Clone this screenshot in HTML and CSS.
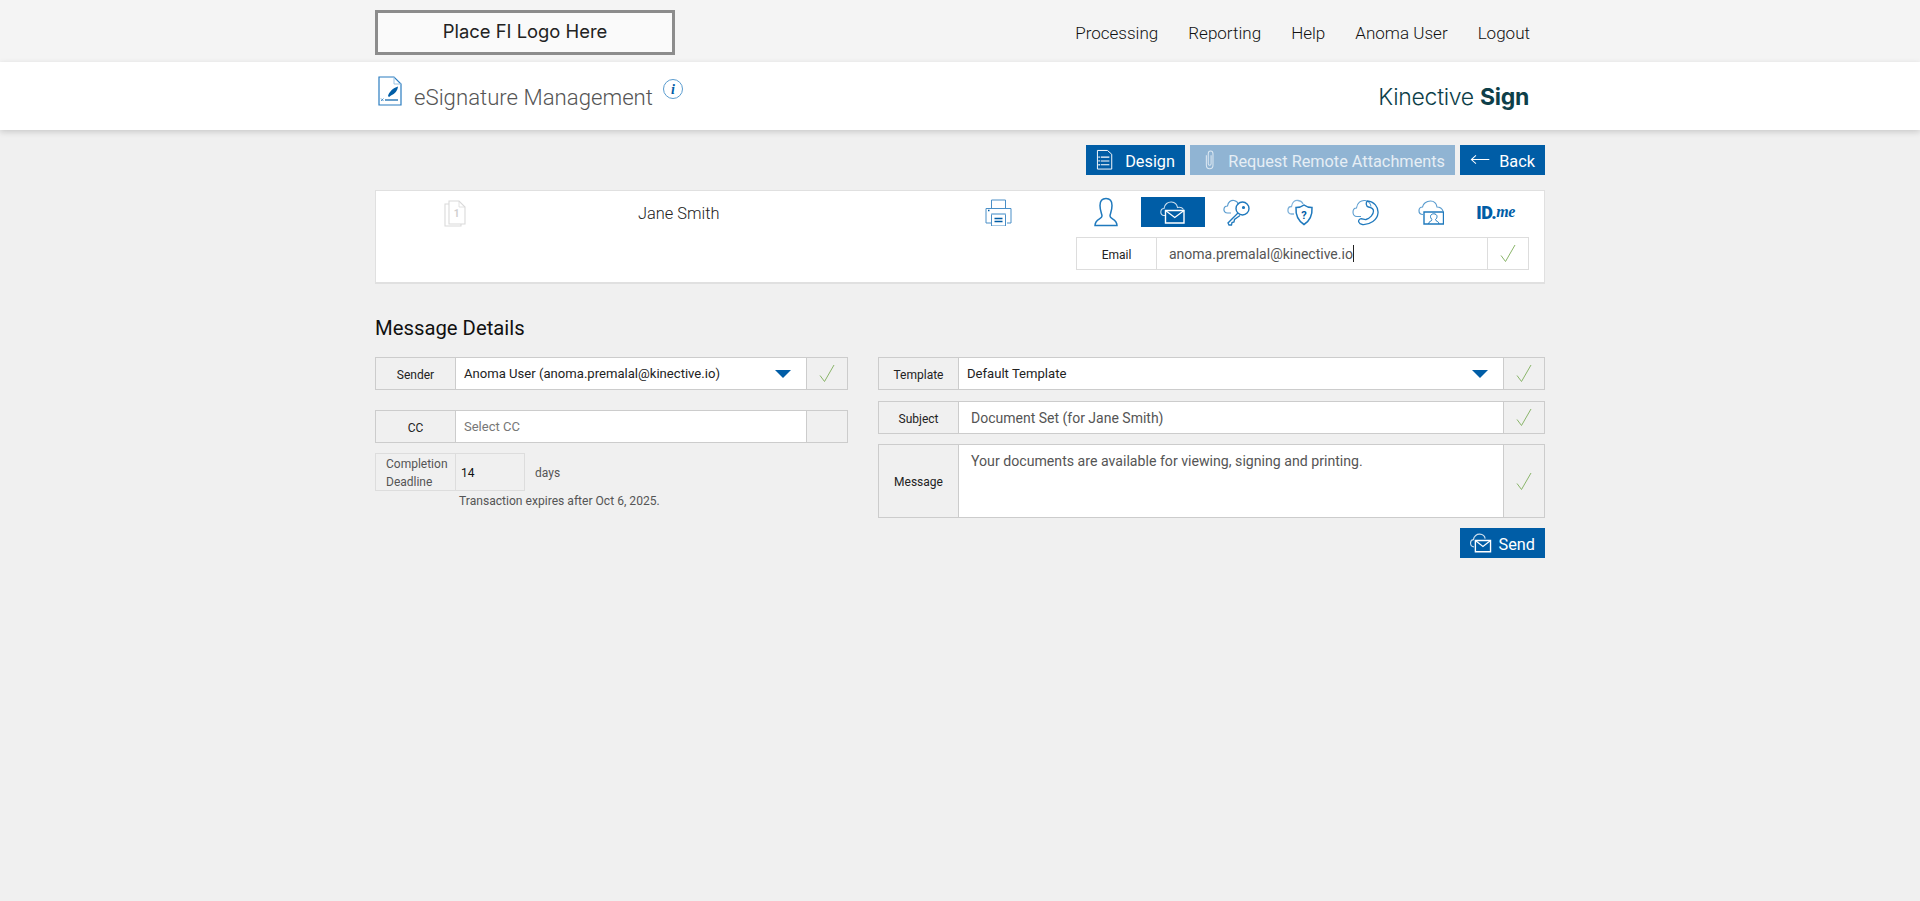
FILE: index.html
```html
<!DOCTYPE html>
<html lang="en">
<head>
<meta charset="utf-8">
<title>eSignature Management</title>
<link rel="stylesheet" href="styles.css">
</head>
<body>
<header class="topbar">
  <div class="wrap topbar-inner">
    <div class="logo-box">Place FI Logo Here</div>
    <nav class="nav">
      <a>Processing</a><a>Reporting</a><a>Help</a><a>Anoma User</a><a>Logout</a>
    </nav>
  </div>
</header>
<div class="titlebar">
  <div class="wrap titlebar-inner">
    <div class="title-left">
      <svg class="doc-icon" width="24" height="30" viewBox="0 0 24 30" fill="none">
        <path d="M1 1H16L23 8V29H1Z" stroke="#2a7cc0" stroke-width="1.2"/>
        <path d="M16 1V8H23" stroke="#9cc3e2" stroke-width="1"/>
        <path d="M10 20C11 16 15 12 20 10.500C19.500 14.500 17 18 13 19.500L11 21Z" fill="#005da6"/>
        <path d="M7 24H20" stroke="#005da6" stroke-width="1.2"/>
        <path d="M3 22.500L5.500 25M5.500 22.500L3 25" stroke="#2a7cc0" stroke-width=".8"/>
      </svg>
      <h1 class="page-title">eSignature Management</h1>
      <svg class="info-icon" width="22" height="22" viewBox="0 0 22 22" fill="none">
        <circle cx="11" cy="11" r="9.500" stroke="#5a9ccf" stroke-width="1"/>
        <text x="11" y="16" text-anchor="middle" class="info-i">i</text>
      </svg>
    </div>
    <div class="brand">Kinective <b>Sign</b></div>
  </div>
</div>
<main class="wrap">
  <div class="actions">
    <button class="btn btn-design">
      <svg width="18" height="22" viewBox="0 0 18 22" fill="none" stroke="#fff" stroke-width="1">
        <path d="M1.500 1H12L16.500 5V20.500H1.500Z"/><path d="M5 8H14M5 12H14M5 16H14" stroke-width="1.200"/><path d="M2.500 8H4M2.500 12H4M2.500 16H4" stroke-width="1.400"/>
      </svg>
      <span>Design</span>
    </button>
    <button class="btn btn-muted">
      <svg width="12" height="22" viewBox="0 0 12 22" fill="none" stroke="#dce8f2" stroke-width="1.100">
        <path d="M2.500 6V16.500C2.500 21.500 9.500 21.500 9.500 16.500V4.500C9.500 .5 4.500 .5 4.500 4.500V15C4.500 17 7.500 17 7.500 15V6"/>
      </svg>
      <span>Request Remote Attachments</span>
    </button>
    <button class="btn btn-back">
      <svg width="22" height="12" viewBox="0 0 22 12" fill="none" stroke="#fff" stroke-width="1.100">
        <path d="M21 5.500H1.500M6.500 1L1.500 5.500L6.500 10"/>
      </svg>
      <span>Back</span>
    </button>
  </div>

  <section class="panel">
    <div class="panel-page">
      <svg width="22" height="27" viewBox="0 0 22 27" fill="none" stroke="#dadada" stroke-width="1.100">
        <path d="M5 1H15L21 7V24H5Z"/><path d="M5 4H1V26H17V24"/><path d="M15 1V7H21" stroke-width=".8"/>
        <text x="12.500" y="17" text-anchor="middle" class="page-num">1</text>
      </svg>
    </div>
    <div class="panel-name">Jane Smith</div>
    <div class="panel-print">
      <svg width="27" height="27" viewBox="0 0 27 27" fill="none" stroke="#4a8fc7" stroke-width="1">
        <path d="M6.500 9V1H20.500V9"/><path d="M6 24H1V9.500H26V24H22"/><path d="M6.500 15H20.500V27H6.500Z" fill="#fff"/><path d="M6.500 15H20.500" stroke="#9cc3e2" stroke-width="2"/>
        <path d="M9.500 19.500H17.500M9.500 22.500H17.500" stroke="#005da6" stroke-width="1.300"/><path d="M3 11.500H4.500" stroke="#005da6" stroke-width="1.500"/>
      </svg>
    </div>
    <div class="panel-auth">
      <div class="tabs">
        <a class="tab">
          <svg width="24" height="30" viewBox="0 0 24 30" fill="none" stroke="#1f79bd" stroke-width="1.500">
            <path d="M8 19C8 17 6 14 6 8.500C6 4 8.500 1.500 12 1.500C15.500 1.500 18 4 18 8.500C18 14 16 17 16 19C16 22 23 22 23 28.500H1C1 22 8 22 8 19Z"/>
          </svg>
        </a>
        <a class="tab tab-active">
          <svg width="25" height="23" viewBox="0 0 25 23" fill="none" stroke="#fff" stroke-width="1.100">
            <path class="cloud-soft" d="M5 14.500H4C-.500 14.500 0 7.500 4 7.500C4.500 3 8 .8 11.500 1C15 1.200 17 3.500 17.500 6.500C20 6 22.500 7 23.500 8.500"/>
            <path d="M5.500 9.500H24V22H5.500Z" stroke-width="1.400"/><path d="M5.500 9.500L14.750 16.500L24 9.500" stroke-width="1.200"/>
          </svg>
        </a>
        <a class="tab">
          <svg width="27" height="27" viewBox="0 0 27 27" fill="none" stroke="#1f79bd" stroke-width="1.200">
            <path stroke="#5a9ccf" d="M8 14H4.500C-.500 14 0 7 4.500 7C5 3 8 1 11 1.500C13.500 2 15 3.500 15.500 5.500"/>
            <circle cx="19.500" cy="9.500" r="6.500" stroke-width="1.400"/><circle cx="20.500" cy="8.500" r="1" fill="#1f79bd"/>
            <path d="M15 14L5 24L6 26L8.500 26L9 23.500L11 23L11.500 20.500L17 16.500" stroke-width="1.300"/>
          </svg>
        </a>
        <a class="tab">
          <svg width="27" height="27" viewBox="0 0 27 27" fill="none" stroke="#1f79bd" stroke-width="1.300">
            <path stroke="#7fb2da" d="M7 15H4.500C-.500 15 0 7.500 4.500 7.500C5 3 8 1 11 1.500C14 2 15.500 3.500 16 5"/>
            <path d="M17 6C19.500 8 22 8.500 25 8.500C25.500 16 22.500 22 17 25.500C11.500 22 8.500 16 9 8.500C12 8.500 14.500 8 17 6Z" stroke-width="1.500"/>
            <text x="17" y="19.500" text-anchor="middle" class="shield-q">?</text>
          </svg>
        </a>
        <a class="tab">
          <svg width="27" height="27" viewBox="0 0 27 27" fill="none" stroke="#1f79bd" stroke-width="1.300">
            <path stroke="#5a9ccf" stroke-width="1.100" d="M9 17.500H5C-.500 17.500 0 9 4.500 9C5 4 9 1 13 1.500C16.500 2 18.500 4.500 19 7.500"/>
            <path d="M15.500 2C22 2.500 26.500 8 26 14C25.500 21 18 26 10.500 25.500C6.500 25 5.500 21.500 8 20C10 19 12 21 14 20.500C18 19.500 21.500 15.500 21.500 12C21.500 9.500 19 8.500 16.500 8C14 7.500 13.500 3.500 15.500 2Z"/>
          </svg>
        </a>
        <a class="tab">
          <svg width="26" height="25" viewBox="0 0 26 25" fill="none" stroke="#1f79bd" stroke-width="1.200">
            <path stroke="#5a9ccf" d="M5 14.500C-.500 14.500 0 7 4.500 7C5 3.500 8.500 1 12.500 1C16.500 1 18.500 4 19 7C21.500 7 24 8.500 25 11"/>
            <path d="M6 12H25.500V24H6Z" stroke-width="1.400"/>
            <path d="M10.500 24C10.500 21 14 21.500 14 19.500C13 18.800 12.500 17.500 12.500 16.500C12.500 14.800 14 13.800 15.750 13.800C17.500 13.800 19 14.800 19 16.500C19 17.500 18.500 18.800 17.500 19.500C17.500 21.500 21 21 21 24" stroke-width="1"/>
          </svg>
        </a>
        <a class="tab tab-id"><b>ID.</b><i>me</i></a>
      </div>
      <div class="field field-email">
        <div class="field-label field-label-plain">Email</div>
        <div class="field-value field-value-lg">anoma.premalal@kinective.io<span class="caret"></span></div>
        <div class="field-check field-check-plain">
          <svg class="check" width="16" height="19" viewBox="0 0 16 19" fill="none"><path d="M1 11.500L5.500 17.500L15 1"/></svg>
        </div>
      </div>
    </div>
  </section>

  <h2 class="section-title">Message Details</h2>

  <section class="columns">
    <div class="col-left">
      <div class="field">
        <div class="field-label">Sender</div>
        <div class="field-value field-select">
          <span>Anoma User (anoma.premalal@kinective.io)</span><span class="arrow"></span>
        </div>
        <div class="field-check">
          <svg class="check" width="16" height="19" viewBox="0 0 16 19" fill="none"><path d="M1 11.500L5.500 17.500L15 1"/></svg>
        </div>
      </div>
      <div class="field field-cc">
        <div class="field-label">CC</div>
        <div class="field-value field-placeholder">Select CC</div>
        <div class="field-check"></div>
      </div>
      <div class="deadline">
        <div class="deadline-label">Completion<br>Deadline</div>
        <div class="deadline-value">14</div>
        <div class="deadline-unit">days</div>
      </div>
      <p class="expires">Transaction expires after Oct 6, 2025.</p>
    </div>
    <div class="col-right">
      <div class="field">
        <div class="field-label">Template</div>
        <div class="field-value field-select">
          <span>Default Template</span><span class="arrow"></span>
        </div>
        <div class="field-check">
          <svg class="check" width="16" height="19" viewBox="0 0 16 19" fill="none"><path d="M1 11.500L5.500 17.500L15 1"/></svg>
        </div>
      </div>
      <div class="field field-subject">
        <div class="field-label">Subject</div>
        <div class="field-value field-value-lg">Document Set (for Jane Smith)</div>
        <div class="field-check">
          <svg class="check" width="16" height="19" viewBox="0 0 16 19" fill="none"><path d="M1 11.500L5.500 17.500L15 1"/></svg>
        </div>
      </div>
      <div class="field field-message">
        <div class="field-label">Message</div>
        <div class="field-value field-value-lg field-top">Your documents are available for viewing, signing and printing.</div>
        <div class="field-check">
          <svg class="check" width="16" height="19" viewBox="0 0 16 19" fill="none"><path d="M1 11.500L5.500 17.500L15 1"/></svg>
        </div>
      </div>
      <div class="send-row">
        <button class="btn btn-send">
          <svg width="22" height="20" viewBox="0 0 22 20" fill="none" stroke="#fff" stroke-width="1.200">
            <path class="cloud-soft" d="M4 14C-.500 13.500 -.500 7 3.500 6.500C4 3 7 .8 10 1C13 1.200 15 3 15.500 5.500"/>
            <path d="M5.500 7.500H21V19H5.500Z" stroke-width="1.400"/><path d="M5.500 7.500L13.250 13.500L21 7.500"/>
          </svg>
          <span>Send</span>
        </button>
      </div>
    </div>
  </section>
</main>
</body>
</html>
```
FILE: styles.css
```css
* { box-sizing: border-box; }
html, body { margin: 0; padding: 0; }
body {
  background: #f0f0f0;
  color: #333;
  font-family: Roboto, "Liberation Sans", sans-serif;
  min-height: 901px;
}
.wrap { width: 1170px; margin: 0 auto; }

.topbar { height: 62px; background: #f4f4f4; }
.topbar-inner { display: flex; justify-content: space-between; align-items: flex-start; }
.logo-box {
  width: 300px;
  height: 45px;
  margin-top: 10px;
  border: 3px solid #8c8c8c;
  background: #fafafa;
  color: #222;
  font: 400 18.400px/37px Inter, Lato, sans-serif;
  text-align: center;
}
.nav { display: flex; gap: 30px; padding: 24px 15px 0 0; }
.nav a { font-size: 17.050px; font-weight: 300; line-height: 19px; color: #111; }

.titlebar {
  position: relative;
  height: 68px;
  background: #fff;
  box-shadow: 0 2px 6px rgba(0, 0, 0, .16);
}
.titlebar-inner { display: flex; justify-content: space-between; }
.title-left { display: flex; align-items: flex-start; padding-left: 3px; }
.doc-icon { margin-top: 14px; }
.page-title {
  margin: 22px 0 0 12px;
  font-size: 22.200px;
  font-weight: 300;
  line-height: 26px;
  color: #555;
}
.info-icon { margin: 16px 0 0 9px; }
.info-i { font: italic 700 14px "Liberation Serif", serif; fill: #005da6; stroke: none; }
.brand {
  padding: 21px 16px 0 0;
  font: 300 23px/28px Inter, Lato, sans-serif;
  letter-spacing: -.3px;
  color: #0e3f49;
}
.brand b { font-weight: 700; }

.actions { display: flex; justify-content: flex-end; gap: 5px; padding-top: 15px; }
.btn {
  display: flex;
  flex: none;
  align-items: center;
  gap: 12px;
  height: 30px;
  padding: 0 10px;
  border: 0;
  background: #005da6;
  color: #fff;
  font: 400 16.300px Roboto, sans-serif;
  white-space: nowrap;
}
.btn span { padding-top: 2px; }
.btn-design { width: 99px; }
.btn-muted { width: 265px; padding-left: 14px; gap: 13px; background: #90b4d3; color: #e6eef5; }
.btn-back { width: 85px; gap: 9px; padding-left: 10px; }
.btn-send { width: 85px; gap: 7px; padding-left: 10px; }
.cloud-soft { stroke-opacity: .8; }

.panel {
  position: relative;
  display: flex;
  align-items: flex-start;
  height: 94px;
  margin-top: 15px;
  border: 1px solid #e0e0e0;
  border-bottom-width: 2px;
  background: #fff;
}
.panel-page { width: 141px; padding: 9px 0 0 68px; }
.panel-name { width: 287px; padding: 12px 0 0 121px; font-size: 16.400px; font-weight: 300; line-height: 21px; color: #222; }
.panel-print { width: 272px; padding: 8px 0 0 181px; }
.panel-auth { width: 453px; padding-top: 6px; }

.tabs { display: flex; gap: 1px; }
.tab { display: flex; width: 64px; height: 30px; padding-right: 3px; align-items: center; justify-content: center; }
.tab-active { padding-right: 0; background: #005da6; }
.tab-id { color: #005da6; font-size: 18px; letter-spacing: -.5px; }
.tab-id b { font-weight: 900; }
.tab-id i { font: italic 700 16px "Liberation Serif", serif; }
.page-num { font: 700 10px Roboto, sans-serif; fill: #cfcfcf; stroke: none; }
.shield-q { font: 700 11px Roboto, sans-serif; fill: #005da6; stroke: none; }

.field {
  display: flex;
  height: 33px;
  border: 1px solid #ccc;
  background: transparent;
}
.field-email { margin-top: 10px; border-color: #ddd; }
.field-label {
  display: flex;
  flex: none;
  width: 80px;
  align-items: center;
  justify-content: center;
  padding-top: 2px;
  border-right: 1px solid #ccc;
  font-size: 12px;
  color: #222;
}
.field-label-plain { border-right-color: #ddd; background: #fff; }
.field-value {
  display: flex;
  flex: 1;
  align-items: center;
  min-width: 0;
  padding: 0 12px;
  background: #fff;
  font-size: 13.100px;
  color: #222;
}
.field-value-lg { font-size: 14px; color: #555; }
.field-select { justify-content: space-between; padding-left: 8px; }
.field-placeholder { color: #777; font-size: 13px; padding-left: 8px; }
.field-check {
  display: flex;
  flex: none;
  width: 41px;
  align-items: center;
  justify-content: center;
  border-left: 1px solid #ccc;
}
.field-check-plain { border-left-color: #ddd; background: #fff; }
.check path { stroke: #8ab56a; stroke-width: 1; }
.caret { width: 1px; height: 17px; background: #222; }
.arrow {
  width: 0;
  height: 0;
  margin-right: 3px;
  border-left: 8px solid transparent;
  border-right: 8px solid transparent;
  border-top: 8px solid #005da6;
}

.section-title {
  margin: 32px 0 0;
  font-size: 20.300px;
  font-weight: 400;
  line-height: 24px;
  color: #111;
}
.columns { display: flex; gap: 30px; margin-top: 17px; }
.col-left { flex: none; width: 473px; }
.col-right { flex: none; width: 667px; }
.field-cc { margin-top: 20px; }
.deadline { display: flex; margin-top: 10px; }
.deadline-label {
  width: 81px;
  height: 38px;
  padding: 1px 0 0 10px;
  border: 1px solid #ddd;
  font-size: 12px;
  line-height: 18px;
  color: #555;
}
.deadline-value {
  width: 69px;
  height: 38px;
  padding-left: 5px;
  border: 1px solid #ddd;
  border-left: 0;
  font-size: 12px;
  line-height: 38px;
  color: #111;
}
.deadline-unit { padding: 1px 0 0 10px; font-size: 12px; line-height: 38px; color: #555; }
.expires { margin: 1px 0 0 84px; font-size: 12.100px; line-height: 16px; color: #555; }

.field-subject { margin-top: 11px; }
.field-message { height: 74px; margin-top: 10px; }
.field-top { align-items: flex-start; padding-top: 8px; font-size: 14.150px; }
.send-row { display: flex; justify-content: flex-end; margin-top: 10px; }
```
